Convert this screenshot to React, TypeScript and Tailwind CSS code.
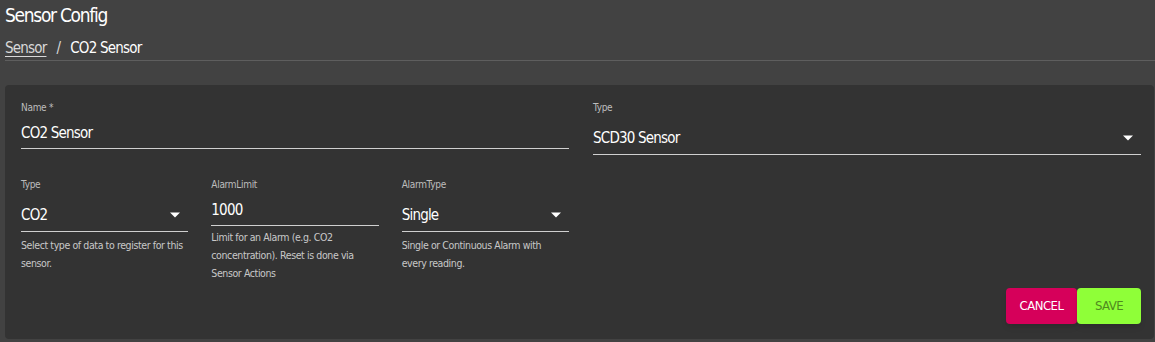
import React from 'react';

const font = { fontFamily: '"DejaVu Sans Condensed", "Liberation Sans", sans-serif' };

const Arrow = () => (
  <svg width="12" height="8" viewBox="0 0 12 8" className="shrink-0">
    <path d="M1 1.5h10L6 6.5z" fill="#ffffff" />
  </svg>
);

const SelectField: React.FC<{ label: string; value: string; helper?: string; helperWidth?: string }> = ({ label, value, helper, helperWidth = '' }) => (
  <div className="flex flex-col">
    <div className="h-[14px] text-[10px] leading-[14px] tracking-[-0.3px] text-[#bdbdbd]">{label}</div>
    <div className="mt-[12px] flex h-[22px] items-center justify-between pr-[7px]">
      <span className="text-[15px] leading-[22px] tracking-[-0.8px] text-white">{value}</span>
      <Arrow />
    </div>
    <div className="mt-[5px] h-px bg-[#d0d0d0]" />
    {helper && <div className={`mt-[4px] text-[10.5px] leading-[18px] tracking-[-0.4px] text-[#c8c8c8] ${helperWidth}`}>{helper}</div>}
  </div>
);

const TextField: React.FC<{ label: string; value: string; helper?: string }> = ({ label, value, helper }) => (
  <div className="flex flex-col">
    <div className="h-[14px] text-[10px] leading-[14px] tracking-[-0.3px] text-[#bdbdbd]">{label}</div>
    <div className="mt-[7px] h-[22px] text-[15px] leading-[22px] tracking-[-0.8px] text-white">{value}</div>
    <div className="mt-[4px] h-px bg-[#d0d0d0]" />
    {helper && <div className="mt-[2px] text-[10.5px] leading-[18px] tracking-[-0.4px] text-[#c8c8c8]">{helper}</div>}
  </div>
);

export default function App() {
  return (
    <div className="min-h-[342px] w-full bg-[#424242] text-white" style={font}>
      <div className="pl-[5px]">
        <h1 className="pt-[2px] text-[19px] leading-[26px] tracking-[-1.3px] text-white">Sensor Config</h1>
        <div className="mt-[9px] flex items-center gap-[10px] text-[15px] leading-[22px] tracking-[-0.8px]">
          <a className="underline underline-offset-[3px] text-[#d8d8d8]">Sensor</a>
          <span className="text-[#d8d8d8]">/</span>
          <span className="text-white">CO2 Sensor</span>
        </div>
        <div className="mt-[1px] h-px bg-[#5e5e5e]" />
      </div>

      <div className="ml-[5px] mr-px mt-[24px] rounded-[4px] bg-[#333333] pl-[16px] pr-[13px] pt-[16px] pb-[15px]">
        <div className="grid grid-cols-2 gap-x-[24px]">
          <TextField label="Name *" value="CO2 Sensor" />
          <SelectField label="Type" value="SCD30 Sensor" />
        </div>

        <div className="mt-[23px] grid grid-cols-2 gap-x-[24px]">
          <div className="grid grid-cols-3 gap-x-[23px]">
            <SelectField label="Type" value="CO2" helper="Select type of data to register for this sensor." />
            <TextField label="AlarmLimit" value="1000" helper="Limit for an Alarm (e.g. CO2 concentration). Reset is done via Sensor Actions" />
            <SelectField label="AlarmType" value="Single" helper="Single or Continuous Alarm with every reading." helperWidth="max-w-[150px]" />
          </div>
          <div />
        </div>

        <div className="mt-[6px] flex justify-end">
          <button className="h-[36px] w-[71px] rounded-[4px] bg-[#d6005a] text-[13px] tracking-[-0.5px] text-white shadow-md">CANCEL</button>
          <button className="h-[36px] w-[64px] rounded-[4px] bg-[#8fff38] text-[13px] tracking-[-0.5px] text-[#4f8a1f] shadow-md">SAVE</button>
        </div>
      </div>
    </div>
  );
}
